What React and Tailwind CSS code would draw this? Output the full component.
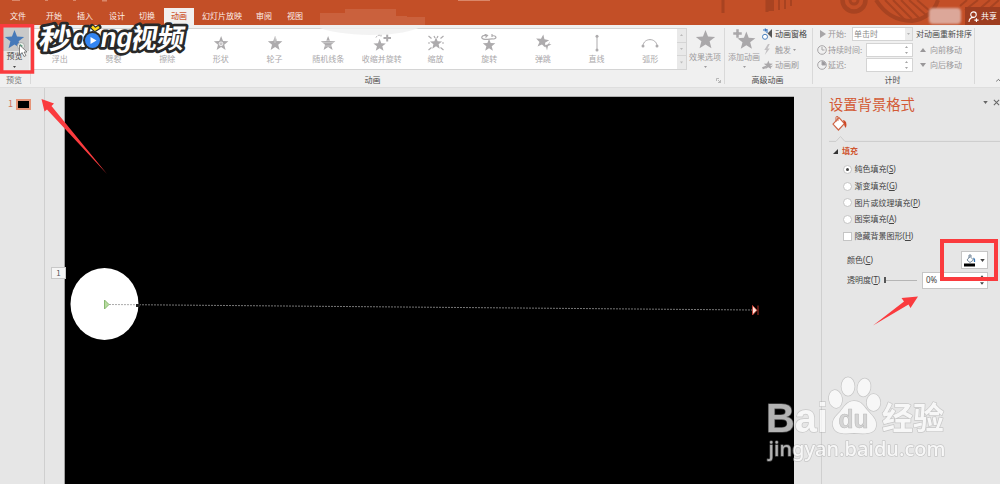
import React from 'react';

const STAR = 'M12 1 L14.9 8.6 L23 9 L16.7 14.1 L18.8 22 L12 17.6 L5.2 22 L7.3 14.1 L1 9 L9.1 8.6 Z';

function Star({ className }) {
  return (
    <svg viewBox="0 0 24 24" className={className} fill="currentColor">
      <path d={STAR} />
    </svg>
  );
}

function EffectIcon({ kind }) {
  const p = { fill: '#adabad' };
  const s = { fill: 'none', stroke: '#adabad', strokeWidth: 1 };
  const star = <path d={STAR} {...p} transform="translate(2.2 1.4) scale(.66)" />;
  return (
    <svg viewBox="0 0 20 18" className="h-[18px] w-5">
      {kind === 'plain' && star}
      {kind === 'shape' && (
        <>
          {star}
          <circle cx="10" cy="9.8" r="1.9" fill="#c9c7c9" stroke="#fff" strokeWidth=".7" />
        </>
      )}
      {kind === 'wheel' && (
        <>
          {star}
          <path d="M10 9V2.500L11.800 7.300" fill="none" stroke="#ddd" strokeWidth=".7" />
        </>
      )}
      {kind === 'bars' && (
        <>
          {star}
          <path d="M3 6.600H17M3 8.700H17M3 12H17" stroke="#fff" strokeWidth=".4" />
        </>
      )}
      {kind === 'shrink' && (
        <>
          <path d={STAR} {...p} transform="translate(.8 4.300) scale(.57)" />
          <path d="M11.500 4h7.500M15.200 .5v7" stroke="#adabad" strokeWidth="2" />
          <path d="M4 3.500Q6 0 9 1.500M9 .5v3" {...s} strokeDasharray="2 1" />
        </>
      )}
      {kind === 'zoom' && (
        <>
          <path d={STAR} {...p} transform="translate(3.400 2.600) scale(.55)" />
          <path d="M2.500 2l3 2.500M17.500 2l-3 2.500M2.500 16l3-2.500M17.500 16l-3-2.500M2 9h2M18 9h-2M8 2l1 2M12 2l-1 2" {...s} strokeWidth="1.200" />
        </>
      )}
      {kind === 'spin' && (
        <>
          <path d={STAR} {...p} transform="translate(3.200 4.200) scale(.57)" />
          <path d="M7.500 1.500C2 1 1 5 6 5.300C10 5.500 12 4.500 14.500 5C18 4.500 18 1.500 12.500 1.500M5.500 0l3 1.500l-2 2M13 0v3" {...s} strokeWidth="1.200" />
        </>
      )}
      {kind === 'bounce' && (
        <>
          <path d={STAR} {...p} transform="translate(1.500 .5) rotate(8 12 12) scale(.6)" />
          <path d="M10 12l3 .8l1 3.700l1-4.500l3.500-1.500l-2.300-.5l.8-2.500l-2 2.800" {...p} />
        </>
      )}
      {kind === 'line' && (
        <>
          <path d="M10 2V16" {...s} />
          <circle cx="10" cy="2.300" r="1.500" {...p} />
          <circle cx="10" cy="15.900" r="1.500" {...p} />
        </>
      )}
      {kind === 'arc' && (
        <>
          <path d="M3 12C3.500 3.500 16.500 3.500 17 12" {...s} />
          <circle cx="3" cy="12" r="1.500" {...p} />
          <circle cx="17" cy="12" r="1.500" {...p} />
        </>
      )}
    </svg>
  );
}

const EFFECTS = [
  ['浮出', 'none'],
  ['劈裂', 'none'],
  ['擦除', 'none'],
  ['形状', 'shape'],
  ['轮子', 'wheel'],
  ['随机线条', 'bars'],
  ['收缩并旋转', 'shrink'],
  ['缩放', 'zoom'],
  ['旋转', 'spin'],
  ['弹跳', 'bounce'],
  ['直线', 'line'],
  ['弧形', 'arc'],
];

function Caret({ className = '', up = false, size = 'h-[3px] w-[5px]' }) {
  return (
    <svg viewBox="0 0 6 4" className={`${size} ${className}`} fill="currentColor">
      <path d={up ? 'M0 4L3 0L6 4Z' : 'M0 0H6L3 4Z'} />
    </svg>
  );
}

function TitleBar() {
  return (
    <header className="relative flex h-[25px] items-end bg-[#c34f27] text-[8px] leading-none text-[#fdeee7]">
      <svg className="absolute left-0 top-0 h-[25px] w-full" viewBox="0 0 1000 25">
        <g fill="none" stroke="#a84321">
          <path d="M723 0V13M767 0V12" strokeWidth="3" />
          <path d="M771 0V11" strokeWidth="6" />
          <path d="M779 0V10M785 0V9M791 0V6" strokeWidth="2" />
          <circle cx="854" cy="0" r="11.500" strokeWidth="4.500" />
          <circle cx="854" cy="0" r="4" strokeWidth="3" />
          <path d="M876 0Q889 21 912 21Q932 18 938 0" strokeWidth="4" />
          <path d="M885 0L905 20M893 0L912 19M901 0L919 18M909 0L926 15M917 0L931 12" strokeWidth="2" />
          <path d="M960 6L967 0M965 10L978 0M970 17L990 0M983 14L999 0" strokeWidth="2" />
        </g>
        <g fill="#e9ae96">
          <path d="M12 0h8v1h-8zM45 0h3v1h-3zM73 0h3v1h-3zM102 0h5v1.500h-5zM458 0h32v1h-32z" opacity=".6" />
        </g>
        <g fill="#d98c70" opacity=".3">
          <path d="M320 13h25v12h-25zM345 9h26v16h-26zM371 9h25v7h-25zM371 16h36v9h-36zM407 17h18v8h-18z" />
        </g>
      </svg>
      <nav className="relative flex h-[17px] items-center pb-px">
        <span className="ml-[10px] w-9">文件</span>
        <span className="w-[31px]">开始</span>
        <span className="w-8">插入</span>
        <span className="w-[30px]">设计</span>
        <span className="w-[25px]">切换</span>
        <span className="-mb-px mr-2 flex h-[17px] w-[30px] items-center justify-center bg-[#f2f0ef] pb-px font-medium text-[#cf5c35]">动画</span>
        <span className="w-[54px]">幻灯片放映</span>
        <span className="w-[31px]">审阅</span>
        <span>视图</span>
      </nav>
      <div className="relative ml-auto flex h-[18px] items-center">
        <span className="mr-1 h-4 w-8 rounded-sm bg-[#dca799] blur-[1px]" />
        <span className="flex h-[18px] w-[35px] items-center gap-[2px] bg-[#9e3d20] pl-[3px] text-white">
          <svg viewBox="0 0 12 12" className="h-[11px] w-[11px] shrink-0" fill="none" stroke="#fff" strokeWidth="1.200">
            <circle cx="6" cy="4" r="3" />
            <path d="M1 12C1.500 8 4 7 6 7M7 10h4.500M9.200 7.800v4.400" />
          </svg>
          共享
        </span>
      </div>
    </header>
  );
}

function Group({ width, label, children, light = false }) {
  return (
    <section className={`relative flex h-full shrink-0 flex-col ${width}`}>
      <div className="h-[48px]">{children}</div>
      <div className={`flex h-[15px] items-center justify-center pr-[3px] ${light ? 'text-[#777]' : 'text-[#4d4d4d]'}`}>{label}</div>
      <span className="absolute right-0 top-[3px] h-[56px] w-px bg-[#d9d9d9]" />
    </section>
  );
}

function Clock({ filled = false }) {
  return (
    <svg viewBox="0 0 10 10" className="h-[10px] w-[10px] shrink-0" fill="none" stroke="#a7a5a7" strokeWidth="1">
      <circle cx="5" cy="5" r="4.300" />
      {filled ? <path d="M5 1.500A3.500 3.500 0 0 1 8.500 5H5Z" fill="#96949a" /> : <path d="M5 2V5H7.500" />}
    </svg>
  );
}

function Spin({ short = false }) {
  return (
    <span className={`flex h-[14px] ${short ? 'w-[61px] text-[#8a8a8a]' : 'w-[47px]'} items-center border border-[#d4d4d4] bg-white`}>
      {short ? (
        <>
          <span className="flex-1 pl-px">单击时</span>
          <span className="flex h-full w-[7px] items-center justify-center bg-[#ececec] text-[#b5b5b5]"><Caret size="h-[2px] w-[3px]" /></span>
        </>
      ) : (
        <span className="ml-auto mr-1 flex flex-col gap-1 text-[#a5a5a5]">
          <Caret up size="h-[2px] w-[3px]" />
          <Caret size="h-[2px] w-[3px]" />
        </span>
      )}
    </span>
  );
}

function Ribbon() {
  return (
    <div className="flex h-[63px] border-b border-[#dedede] bg-[#f0f0f0] text-[8px] leading-none">
      <Group width="w-[31px]" label="预览" light>
        <div className="flex h-[46px] w-[29px] flex-col items-center bg-[#e7e7e7] text-[#444]">
          <div className="flex h-[26px] w-full items-center justify-center bg-[#c9c9c9]">
            <Star className="mt-[2px] h-[21px] w-[21px] text-[#4679b9]" />
          </div>
          <span className="mt-[1px]">预览</span>
          <Caret className="mt-[6px]" size="h-[2px] w-[3px]" />
        </div>
      </Group>
      <Group width="w-[694px]" label={<span className="-translate-x-1">动画</span>}>
        <div className="flex h-full">
          <div className="mt-[3px] flex h-[42px] w-[656px] border border-[#d4d4d4] bg-white">
            <div className="flex w-[645px] pl-[1px]">
              {EFFECTS.map(([name, kind]) => (
                <div key={name} className="flex min-w-0 flex-1 flex-col items-center pt-[5px] text-[#aaa8aa]">
                  <EffectIcon kind={kind} />
                  <span className="mt-[3px] whitespace-nowrap">{name}</span>
                </div>
              ))}
            </div>
            <div className="flex flex-1 flex-col divide-y divide-[#d5d5d5] bg-[#e9e9e9] text-[#bbb]">
              <span className="flex flex-1 items-center justify-center"><Caret up size="h-[2px] w-[3px]" /></span>
              <span className="flex flex-1 items-center justify-center"><Caret size="h-[2px] w-[3px]" /></span>
              <span className="flex flex-1 items-center justify-center"><Caret size="h-[3px] w-[3px]" /></span>
            </div>
          </div>
          <div className="flex w-9 flex-col items-center pt-1 text-[#9d9b9d]">
            <Star className="h-[21px] w-[21px] text-[#aaa8aa]" />
            <span className="mt-[3px] whitespace-nowrap">效果选项</span>
            <Caret className="mt-[5px]" size="h-[2px] w-[3px]" />
          </div>
        </div>
        <svg viewBox="0 0 5 5" className="absolute bottom-1 right-1 h-[5px] w-[5px]" fill="none" stroke="#aaa" strokeWidth=".8">
          <path d="M.5 3V.5H3M2 2L4.500 4.500M4.500 2V4.500H2" />
        </svg>
      </Group>
      <Group width="w-[88px]" label="高级动画">
        <div className="flex pl-[2px]">
          <div className="flex w-[34px] flex-col items-center pt-[3px] text-[#9d9b9d]">
            <svg viewBox="0 0 24 22" className="h-[22px] w-6" fill="#aaa8aa">
              <path d={STAR} transform="translate(4.500 2.800) scale(.82)" />
              <path d="M1 4h3V1h3v3h3v3H7v3H4V7H1z" stroke="#f0f0f0" strokeWidth=".5" />
            </svg>
            <span className="mt-[3px] whitespace-nowrap">添加动画</span>
            <Caret className="mt-[5px]" size="h-[2px] w-[3px]" />
          </div>
          <div className="flex flex-col pl-px pt-[1px] text-[#9b999b]">
            <div className="flex h-[16px] items-center gap-[2px] text-[#414141]">
              <svg viewBox="0 0 11 12" className="h-3 w-[11px]">
                <path d="M10 1V10L5.500 5.500Z" fill="#555" />
                <path d="M1 2h3l-1-1.500M4 2l-1 1.500M5 1v4" fill="none" stroke="#3a75bc" strokeWidth="1.100" />
                <circle cx="3" cy="8.800" r="2.500" fill="#fff" stroke="#4b80bd" />
              </svg>
              动画窗格
            </div>
            <div className="flex h-[15px] items-center gap-[2px]">
              <svg viewBox="0 0 11 12" className="h-[11px] w-[11px]" fill="#c3c1c3"><path d="M6 0L2 6.500H4.500L2.500 12L8 5H5.500L8 0Z" /></svg>
              触发<Caret size="h-[2px] w-[3px]" />
            </div>
            <div className="flex h-[16px] items-center gap-[2px]">
              <svg viewBox="0 0 12 12" className="h-[11px] w-[11px]" fill="#aaa8aa">
                <path d={STAR} transform="translate(1.500 0) scale(.45)" />
                <path d="M0 8L5 6L4 9L1 10ZM8 7L12 6L9 9Z" />
              </svg>
              动画刷
            </div>
          </div>
        </div>
      </Group>
      <Group width="w-[162px]" label="计时">
        <div className="flex pl-1 pt-[2px] text-[#999799]">
          <div className="flex w-[96px] flex-col gap-[1.500px]">
            <div className="flex items-center">
              <span className="flex w-[11px] justify-center"><svg viewBox="0 0 6 8" className="h-2 w-[6px]" fill="#a7a5a7"><path d="M0 0L6 4L0 8Z" /></svg></span>
              <span className="w-[24px] whitespace-nowrap">开始:</span>
              <Spin short />
            </div>
            <div className="flex items-center">
              <Clock /><span className="ml-px w-[38px] whitespace-nowrap">持续时间:</span><Spin />
            </div>
            <div className="flex items-center">
              <Clock filled /><span className="ml-px w-[38px]">延迟:</span><Spin />
            </div>
          </div>
          <div className="flex flex-col pl-[3px]">
            <span className="flex h-[14px] items-center whitespace-nowrap text-[#494949]">对动画重新排序</span>
            <span className="flex h-[17px] items-center pl-1"><Caret up size="h-1 w-[6px]" className="mr-1" />向前移动</span>
            <span className="flex h-[14px] items-center pl-1"><Caret size="h-1 w-[6px]" className="mr-1" />向后移动</span>
          </div>
        </div>
      </Group>
      <div className="flex flex-1 items-end justify-end pb-1">
        <svg viewBox="0 0 5 4" className="h-[5px] w-[4px]" fill="none" stroke="#555"><path d="M0 3.500L3 .5L6 3.500" /></svg>
      </div>
    </div>
  );
}

function Slide() {
  return (
    <main className="flex flex-1 pl-5 pt-[9px]">
      <div className="relative h-full w-[729px] bg-black shadow-[-1px_0_0_#a0a0a0,0_-1px_0_#b0b0b0]">
        <svg className="h-full w-full" viewBox="65 97 729 387">
          <ellipse cx="104.500" cy="304" rx="34" ry="36" fill="#fff" />
          <path d="M109 304.500L752 310" stroke="#969696" strokeWidth=".8" strokeDasharray="2 1" />
          <rect x="136" y="304" width="4" height="3" fill="#222" />
          <path d="M104.500 300V309L109 304.500Z" fill="#b8dca0" stroke="#88b971" />
          <path d="M752.500 305.500V315L757 310.300Z" fill="#ffe1d9" stroke="#d33e30" strokeWidth=".8" />
          <path d="M758 305.500V315" stroke="#b32c20" />
        </svg>
        <span className="absolute -left-[14px] top-[170px] flex h-3 w-[15px] items-center justify-center border border-[#c8c8c8] bg-[#f5f5f5] text-[8px] leading-none text-[#555]">1</span>
      </div>
    </main>
  );
}

function Option({ text, hotkey, checked = false, square = false }) {
  return (
    <div className="flex h-[16.700px] items-center gap-[3px]">
      <span className={`flex h-[9px] w-[9px] items-center justify-center border border-[#c5c5c5] bg-white ${square ? '' : 'rounded-full'}`}>
        {checked && <span className="h-[3px] w-[3px] rounded-full bg-[#444]" />}
      </span>
      <span>{text}(<u>{hotkey}</u>)</span>
    </div>
  );
}

function FormatPane() {
  return (
    <aside className="w-[179px] border-l border-[#cfcfcf] pl-[7px] text-[8px] leading-none text-[#444]">
      <div className="flex h-[28px] items-start justify-between pt-[9px]">
        <h1 className="text-[14.300px] leading-none text-[#d35a35]">设置背景格式</h1>
        <span className="mt-[2px] flex items-center gap-[5px] text-[#666]">
          <Caret />
          <svg viewBox="0 0 8 8" className="h-[7px] w-[7px]" stroke="#666" strokeWidth="1.200"><path d="M1 1L7 7M7 1L1 7" /></svg>
        </span>
      </div>
      <svg viewBox="0 0 172 27" className="h-[27px] w-full" fill="none">
        <path d="M4 8L10 1.500L15.500 7.500L9.500 14Z" fill="#fff" stroke="#cf6545" strokeWidth="1.200" />
        <path d="M7 6V1.500Q7-.5 9 .5V5" stroke="#cf6545" />
        <path d="M14 4Q19 5 17 12Q15 10 15 7Z" fill="#cd4927" />
        <path d="M0 25.500H7L11.500 20.500L16 25.500H172" stroke="#cdcdcd" />
      </svg>
      <div className="mt-[2px] flex h-[12px] items-center gap-1 pl-1 font-bold text-[#d05630]">
        <svg viewBox="0 0 5 5" className="h-[5px] w-[5px]"><path d="M5 0V5H0Z" fill="#333" /></svg>
        填充
      </div>
      <div className="mt-[4px] pl-[13.500px] font-['Noto_Sans','Noto_Sans_CJK_SC',sans-serif]">
        <Option text="纯色填充" hotkey="S" checked />
        <Option text="渐变填充" hotkey="G" />
        <Option text="图片或纹理填充" hotkey="P" />
        <Option text="图案填充" hotkey="A" />
        <Option text="隐藏背景图形" hotkey="H" square />
      </div>
      <div className="mt-[6px] flex h-[20px] items-center justify-between pl-[18px] pr-3 font-['Noto_Sans','Noto_Sans_CJK_SC',sans-serif]">
        <span>颜色(<u>C</u>)</span>
        <span className="flex h-[18px] w-[27px] items-center justify-center gap-[4px] border border-[#c6c6c6] bg-white">
          <svg viewBox="0 0 12 13" className="h-[13px] w-3" fill="none">
            <path d="M3 6L6 2.500L9.500 6L6 8.500ZM5 4V1H7V3" stroke="#667c90" strokeWidth=".9" />
            <path d="M9.500 4Q11 5 10.500 8" stroke="#3977b4" strokeWidth="1.300" />
            <path d="M0 9.500H11V12.500H0Z" fill="#000" />
          </svg>
          <Caret />
        </span>
      </div>
      <div className="flex h-[20px] items-center pl-[18px] pr-3 font-['Noto_Sans','Noto_Sans_CJK_SC',sans-serif]">
        <span className="whitespace-nowrap">透明度(<u>T</u>)</span>
        <span className="ml-1 flex w-[33px] items-center"><i className="h-[6px] w-[2px] bg-[#555]" /><i className="h-px flex-1 bg-[#b5b5b5]" /></span>
        <span className="ml-auto flex h-[17px] w-[66px] items-center justify-between border border-[#c6c6c6] bg-white px-[3px]">
          0%
          <span className="flex flex-col gap-[4px]"><Caret up size="h-[3px] w-1" /><Caret size="h-[3px] w-1" /></span>
        </span>
      </div>
    </aside>
  );
}

function Watermark() {
  return (
    <g fontFamily="'Liberation Sans', sans-serif" fill="#fff" stroke="#9c9c9c" strokeLinejoin="round" opacity=".7">
      <g className="[paint-order:stroke]" strokeWidth="1.500" strokeOpacity=".6">
        <text x="766" y="432" fontSize="41" fontWeight="700" textLength="62" lengthAdjust="spacingAndGlyphs">Bai</text>
        <ellipse cx="835.500" cy="399" rx="6.500" ry="9" transform="rotate(-10 835.500 399)" />
        <ellipse cx="848" cy="386.500" rx="6.500" ry="9.200" />
        <ellipse cx="864" cy="387.500" rx="6.500" ry="9" transform="rotate(12 864 387.500)" />
        <ellipse cx="873.500" cy="402.500" rx="6.800" ry="8.500" />
        <path d="M854 401C847 401 844 407 840 412C835 417 832 420 833 426C835 434 843 434 854 433C866 434 875 434 876 426C877 419 872 416 867 410C863 405 861 401 854 401Z" />
        <text x="882" y="429" fontSize="31" fontWeight="700" textLength="62" lengthAdjust="spacingAndGlyphs" fontFamily="'Noto Sans CJK SC', sans-serif">经验</text>
        <text x="768.500" y="456" fontSize="20" fontWeight="500" textLength="177" lengthAdjust="spacing" fontFamily="'Noto Sans', sans-serif">jingyan.baidu.com</text>
      </g>
      <text x="838.500" y="428" fontSize="26" fontWeight="700" textLength="30" lengthAdjust="spacingAndGlyphs" fill="#cfcfcf" stroke="#a8a8a8" strokeWidth=".6">du</text>
    </g>
  );
}

function VideoLogo() {
  return (
    <>
      <g transform="translate(39 48) skewX(-10)" fontWeight="700" fontFamily="'Noto Sans CJK SC', sans-serif" className="[paint-order:stroke]" fill="#fff" stroke="#292929" strokeWidth="5.500" strokeLinejoin="round">
        <text x="-1" y="1" fontSize="29" textLength="32" lengthAdjust="spacingAndGlyphs">秒</text>
        <text x="90" y="0" fontSize="27" textLength="54" lengthAdjust="spacingAndGlyphs">视频</text>
        <text x="32" y="-1" fontSize="27" textLength="15" lengthAdjust="spacingAndGlyphs" fontFamily="'Liberation Sans', sans-serif">d</text>
        <text x="60" y="-1" fontSize="28" textLength="32" lengthAdjust="spacingAndGlyphs" fontFamily="'Liberation Sans', sans-serif">ng</text>
      </g>
      <circle cx="92.500" cy="40.500" r="9.500" fill="#292929" />
      <circle cx="92.500" cy="40.500" r="7.500" fill="#3385f2" />
      <path d="M90.500 37V44L96.500 40.500Z" fill="#fff" />
      <path d="M92 26.500L95 29.500L99 27" fill="none" stroke="#292929" strokeWidth="5" strokeLinecap="round" strokeLinejoin="round" />
      <path d="M92 26.500L95 29.500L99 27" fill="none" stroke="#ffd91a" strokeWidth="2.500" strokeLinejoin="round" />
    </>
  );
}

function Annotations() {
  return (
    <svg className="pointer-events-none absolute left-0 top-0 h-[484px] w-[1000px]" viewBox="0 0 1000 484">
      <path d="M320 25H425Q408 35 370 35Q335 34 320 28Z" fill="#f0f0f0" opacity=".8" />
      <VideoLogo />
      <circle cx="21" cy="46" r="3.500" fill="#eef3ed" stroke="#aaa" />
      <path d="M20 44V48L23 46Z" fill="#5b9b80" />
      <path d="M19.500 45V55L22 52.500L24 56.500L26 55.500L24 52H27Z" fill="#fff" stroke="#555" strokeWidth=".7" />
      <g fill="none" stroke="#fa3b3e" strokeWidth="3.500">
        <path d="M1.700 25.700H32.500V72H1.700Z" />
        <path d="M942 241H996V279H942Z" strokeWidth="4" />
      </g>
      <g fill="#fa3b3e">
        <path d="M41.500 99L54 103.500L51.500 106L107 174L47 109.500L44.500 111.500Z" />
        <path d="M918 296.500L910.500 308L908.500 304.500L873 325.500L904 301.500L901.500 298Z" />
      </g>
      <Watermark />
    </svg>
  );
}

export default function App() {
  return (
    <div className="relative flex h-[484px] w-[1000px] flex-col overflow-hidden bg-[#e6e6e6] font-['Noto_Sans_CJK_SC',sans-serif]">
      <TitleBar />
      <Ribbon />
      <div className="flex min-h-0 flex-1">
        <aside className="flex w-[45px] items-start gap-[3px] border-r border-[#cfcfcf] pl-2 pt-[11px]">
          <span className="text-[9px] leading-none text-[#d0735b]">1</span>
          <span className="h-[11px] w-[15px] border-2 border-[#e69478] bg-black" />
        </aside>
        <Slide />
        <FormatPane />
      </div>
      <Annotations />
    </div>
  );
}
